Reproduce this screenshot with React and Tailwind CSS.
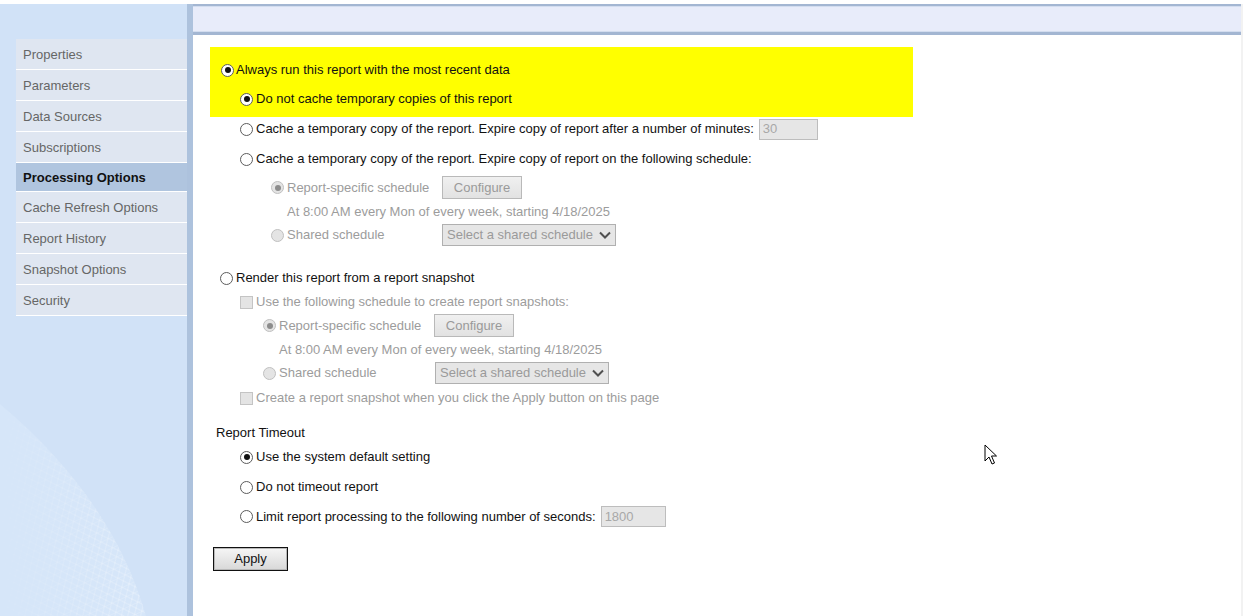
import React from "react";

const Radio = ({ checked = false, disabled = false }) => (
  <span
    className={`inline-flex w-[13px] h-[13px] shrink-0 rounded-full border items-center justify-center ${
      disabled ? "border-[#c0c0c0] bg-[#e4e4e4]" : "border-[#5c5c5c] bg-white"
    }`}
  >
    {checked && (
      <span className={`w-[6px] h-[6px] rounded-full ${disabled ? "bg-[#8c8c8c]" : "bg-[#111]"}`} />
    )}
  </span>
);

const Check = () => (
  <span className="inline-block w-[13px] h-[13px] shrink-0 border border-[#c4c4c4] bg-[#e4e4e4]" />
);

const ConfigureBtn = () => (
  <span className="inline-flex items-center justify-center w-[80px] h-[23px] border border-[#b9b9b9] bg-gradient-to-b from-[#f0f0f0] to-[#e2e2e2] text-[#9a9a9a]">
    Configure
  </span>
);

const SharedSelect = () => (
  <span className="inline-flex items-center justify-between w-[174px] h-[22px] border border-[#b0b0b0] bg-[#e6e6e6] pl-[4px] pr-[4px] text-[#9a9a9a]">
    <span>Select a shared schedule</span>
    <svg width="12" height="8" viewBox="0 0 12 8">
      <path d="M1 1.5 L6 6.5 L11 1.5" fill="none" stroke="#505050" strokeWidth="2" />
    </svg>
  </span>
);

const DisabledInput = ({ value, w }) => (
  <span
    className={`inline-flex items-center h-[21px] border border-[#bdbdbd] bg-[#e6e6e6] pl-[3px] text-[#a8a8a8] ${w}`}
  >
    {value}
  </span>
);

const menu = [
  "Properties",
  "Parameters",
  "Data Sources",
  "Subscriptions",
  "Processing Options",
  "Cache Refresh Options",
  "Report History",
  "Snapshot Options",
  "Security",
];

export default function App() {
  return (
    <div className="w-[1243px] h-[616px] overflow-hidden bg-white pt-[4px] flex font-['Liberation_Sans',Arial,sans-serif] text-[13px] text-[#111] relative">
      {/* Sidebar */}
      <div className="relative w-[187px] shrink-0 bg-[#d1e2f7] pt-[35px] overflow-hidden">
        <svg className="absolute left-0 top-0" width="187" height="612" viewBox="0 0 187 612">
          <defs>
            <pattern id="mesh" width="8" height="10" patternUnits="userSpaceOnUse" patternTransform="rotate(-25)">
              <path d="M0 0 L8 10 M8 0 L0 10 M0 0 L8 0" stroke="#ffffff" strokeWidth="0.7" opacity="0.55" />
            </pattern>
            <linearGradient id="fade" x1="0" y1="0" x2="1" y2="0">
              <stop offset="0" stopColor="#fff" stopOpacity="0.05" />
              <stop offset="1" stopColor="#fff" stopOpacity="1" />
            </linearGradient>
            <mask id="fm">
              <path d="M0 400 C 60 450, 120 520, 146 612 L0 612 Z" fill="url(#fade)" />
            </mask>
          </defs>
          <path d="M0 400 C 60 450, 120 520, 146 612 L0 612 Z" fill="#d6e6f9" />
          <rect x="0" y="380" width="187" height="232" fill="url(#mesh)" mask="url(#fm)" />
        </svg>
        <div className="relative ml-[16px]">
          {menu.map((m) =>
            m === "Processing Options" ? (
              <div key={m} className="h-[29px] flex items-center pl-[7px] pt-[1px] bg-[#b0c5df] font-bold text-[#111] border-b border-white">
                {m}
              </div>
            ) : (
              <div key={m} className="h-[31px] flex items-center pl-[7px] pt-[2px] bg-[#dfe6f1] text-[#666] border-b border-white">
                {m}
              </div>
            )
          )}
        </div>
      </div>
      {/* Divider */}
      <div className="w-[6px] shrink-0 bg-[#adc2dd]" />
      {/* Main */}
      <div className="flex-1 flex flex-col">
        <div className="h-[31px] border-t-2 border-b-[3px] border-[#a3b6d2] bg-[#e8ecfa] shadow-[inset_0_1px_0_#d3ddef,inset_0_-1px_0_#d3ddef]" />
        <div className="pl-[17px] pt-[12px]">
          <div className="w-[703px] h-[70px] bg-[#ffff00] pt-[8px]">
            <div className="h-[30px] flex items-center pl-[11px]">
              <Radio checked />
              <span className="ml-[2px]">Always run this report with the most recent data</span>
            </div>
            <div className="h-[28px] flex items-center pl-[30px]">
              <Radio checked />
              <span className="ml-[3px]">Do not cache temporary copies of this report</span>
            </div>
          </div>
          <div className="h-[22px] mt-[1px] flex items-center pl-[30px]">
            <Radio />
            <span className="ml-[3px]">Cache a temporary copy of the report. Expire copy of report after a number of minutes:</span>
            <span className="ml-[5px]">
              <DisabledInput value="30" w="w-[59px]" />
            </span>
          </div>
          <div className="h-[22px] mt-[8px] flex items-center pl-[30px]">
            <Radio />
            <span className="ml-[3px]">Cache a temporary copy of the report. Expire copy of report on the following schedule:</span>
          </div>
          <div className="h-[23px] mt-[6px] flex items-center pl-[61px] text-[#9c9c9c]">
            <Radio checked disabled />
            <span className="ml-[3px] w-[155px]">Report-specific schedule</span>
            <ConfigureBtn />
          </div>
          <div className="h-[20px] mt-[3px] flex items-center pl-[77px] text-[#9c9c9c]">
            At 8:00 AM every Mon of every week, starting 4/18/2025
          </div>
          <div className="h-[22px] mt-[2px] flex items-center pl-[61px] text-[#9c9c9c]">
            <Radio disabled />
            <span className="ml-[3px] w-[155px]">Shared schedule</span>
            <SharedSelect />
          </div>

          <div className="h-[22px] mt-[21px] flex items-center pl-[10px]">
            <Radio />
            <span className="ml-[3px]">Render this report from a report snapshot</span>
          </div>
          <div className="h-[22px] mt-[2px] flex items-center pl-[30px] text-[#9c9c9c]">
            <Check />
            <span className="ml-[3px]">Use the following schedule to create report snapshots:</span>
          </div>
          <div className="h-[23px] mt-[1px] flex items-center pl-[53px] text-[#9c9c9c]">
            <Radio checked disabled />
            <span className="ml-[3px] w-[155px]">Report-specific schedule</span>
            <ConfigureBtn />
          </div>
          <div className="h-[20px] mt-[3px] flex items-center pl-[69px] text-[#9c9c9c]">
            At 8:00 AM every Mon of every week, starting 4/18/2025
          </div>
          <div className="h-[22px] mt-[2px] flex items-center pl-[53px] text-[#9c9c9c]">
            <Radio disabled />
            <span className="ml-[3px] w-[156px]">Shared schedule</span>
            <SharedSelect />
          </div>
          <div className="h-[22px] mt-[3px] flex items-center pl-[30px] text-[#9c9c9c]">
            <Check />
            <span className="ml-[3px]">Create a report snapshot when you click the Apply button on this page</span>
          </div>

          <div className="h-[22px] mt-[13px] flex items-center pl-[6px]">Report Timeout</div>
          <div className="h-[22px] mt-[2px] flex items-center pl-[30px]">
            <Radio checked />
            <span className="ml-[3px]">Use the system default setting</span>
          </div>
          <div className="h-[22px] mt-[8px] flex items-center pl-[30px]">
            <Radio />
            <span className="ml-[3px]">Do not timeout report</span>
          </div>
          <div className="h-[21px] mt-[8px] flex items-center pl-[30px]">
            <Radio />
            <span className="ml-[3px]">Limit report processing to the following number of seconds:</span>
            <span className="ml-[5px]">
              <DisabledInput value="1800" w="w-[65px]" />
            </span>
          </div>
          <div className="mt-[20px] pl-[3px]">
            <span className="inline-flex items-center justify-center w-[75px] h-[24px] border border-[#111] shadow-[inset_0_0_0_1px_#b8b8b8] bg-gradient-to-b from-[#f6f6f6] to-[#d8d8d8] text-[#111]">
              Apply
            </span>
          </div>
        </div>
      </div>
      <div className="w-[2px] shrink-0 bg-[#f2f2f2]" />
      {/* Mouse cursor */}
      <svg className="absolute left-[984px] top-[444px]" width="14" height="22" viewBox="0 0 14 22">
        <path d="M1 1 L1 17 L5 13 L8 20 L10.5 19 L7.5 12 L12.5 12 Z" fill="#fff" stroke="#000" strokeWidth="1" strokeLinejoin="miter" />
      </svg>
    </div>
  );
}
